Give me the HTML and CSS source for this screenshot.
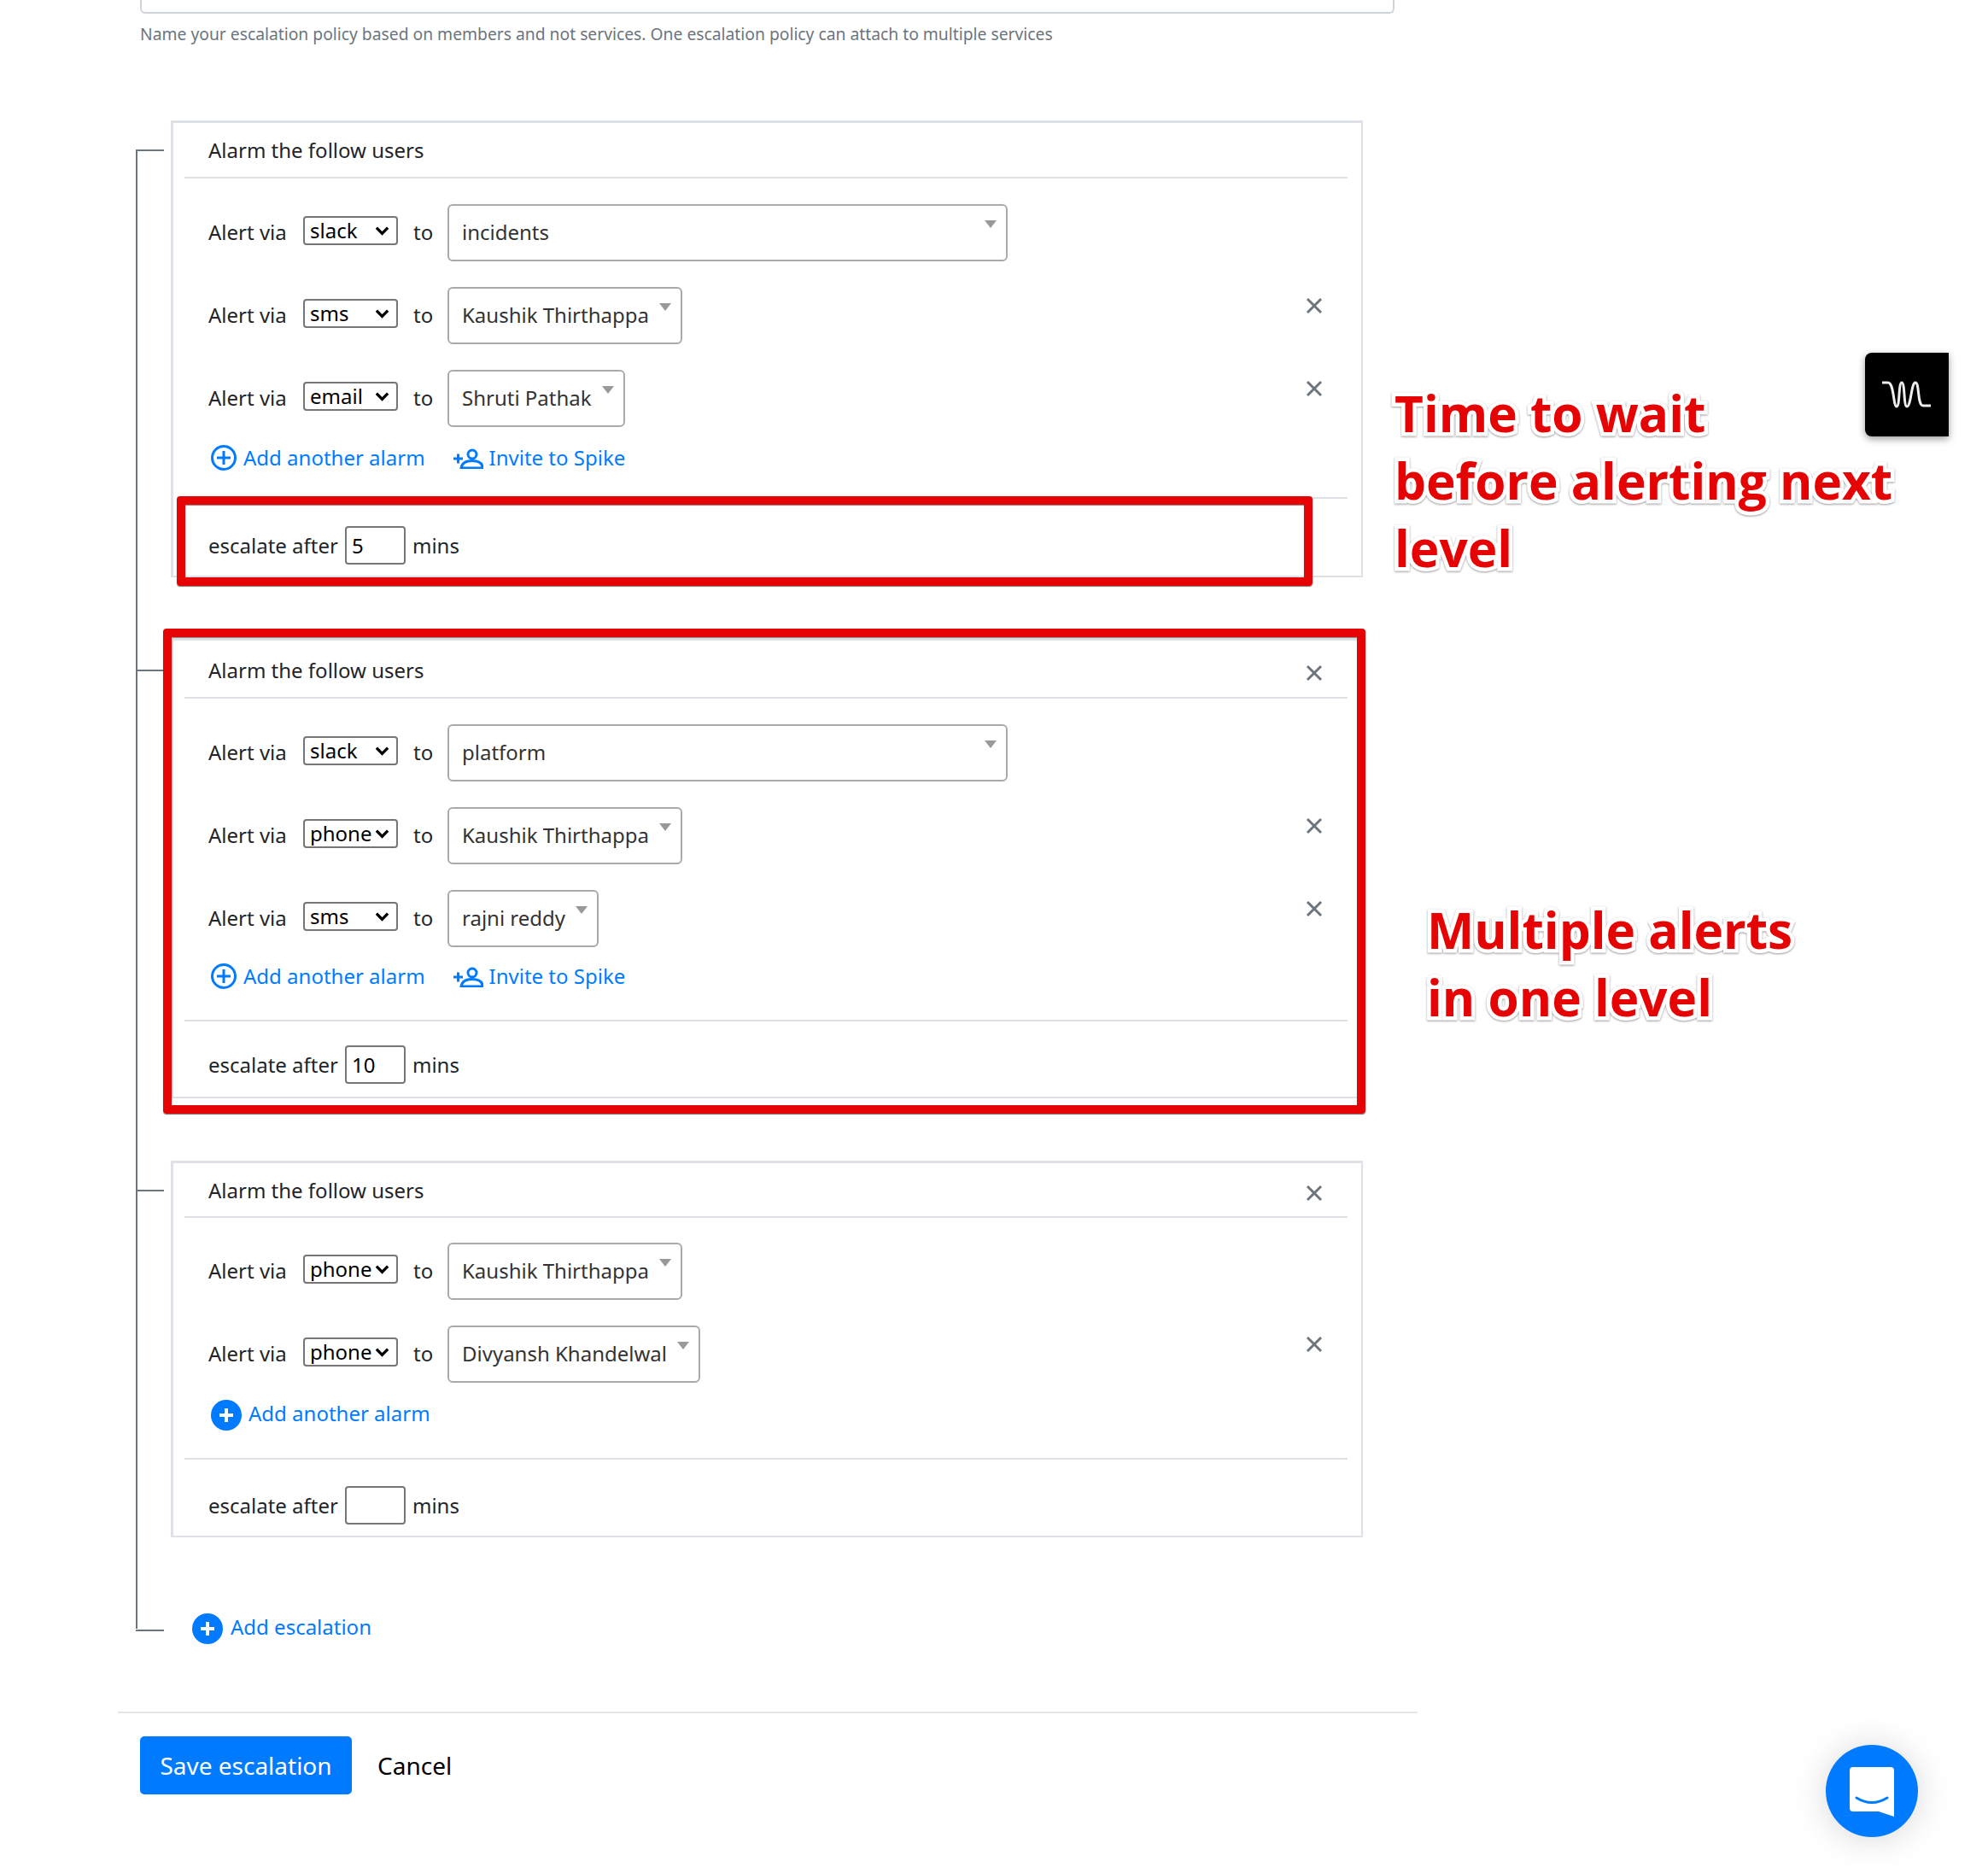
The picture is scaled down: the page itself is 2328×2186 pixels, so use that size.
FILE: index.html
```html
<!DOCTYPE html>
<html lang="en">
<head>
  <meta charset="UTF-8" />
  <title>Escalation policy</title>
  <link rel="stylesheet" href="styles.css">
</head>
<body>
  <div class="page">
    <div class="form">
      <div class="name-input"></div>
      <p class="hint">Name your escalation policy based on members and not services. One escalation policy can attach to multiple services</p>

      <div class="tree">

        <div class="level level-1">
          <div class="level-head">Alarm the follow users</div>
          <div class="alarm">
            <span class="via">Alert via</span>
            <select class="channel"><option>slack</option><option>sms</option><option>email</option><option>phone</option></select>
            <span class="to">to</span>
            <div class="picker picker-wide">incidents</div>
          </div>
          <div class="alarm">
            <span class="via">Alert via</span>
            <select class="channel"><option>sms</option><option>slack</option><option>email</option><option>phone</option></select>
            <span class="to">to</span>
            <div class="picker">Kaushik Thirthappa</div>
            <svg class="close" viewBox="0 0 20 20"><path d="M2 2L18 18M18 2L2 18"/></svg>
          </div>
          <div class="alarm">
            <span class="via">Alert via</span>
            <select class="channel"><option>email</option><option>slack</option><option>sms</option><option>phone</option></select>
            <span class="to">to</span>
            <div class="picker">Shruti Pathak</div>
            <svg class="close" viewBox="0 0 20 20"><path d="M2 2L18 18M18 2L2 18"/></svg>
          </div>
          <div class="actions">
            <a class="link"><svg class="plus-outline" viewBox="0 0 30 30"><circle cx="15" cy="15" r="13.5"/><path d="M15 7V23M7 15H23"/></svg>Add another alarm</a>
            <a class="link link-invite"><svg class="invite" viewBox="0 0 36 24"><path class="invite-line" d="M1 12H12M6.5 6.5V17.500"/><circle class="invite-line" cx="23" cy="7" r="5"/><path class="invite-fill" d="M10 23C11 17 16 14.500 23 14.500C30 14.500 35 17 35 23Z"/></svg>Invite to Spike</a>
          </div>
          <div class="escalate">escalate after <input class="mins" value="5"> mins</div>
        </div>

        <div class="level level-2">
          <div class="level-head">Alarm the follow users<svg class="close" viewBox="0 0 20 20"><path d="M2 2L18 18M18 2L2 18"/></svg></div>
          <div class="alarm">
            <span class="via">Alert via</span>
            <select class="channel"><option>slack</option><option>sms</option><option>email</option><option>phone</option></select>
            <span class="to">to</span>
            <div class="picker picker-wide">platform</div>
          </div>
          <div class="alarm">
            <span class="via">Alert via</span>
            <select class="channel"><option>phone</option><option>slack</option><option>sms</option><option>email</option></select>
            <span class="to">to</span>
            <div class="picker">Kaushik Thirthappa</div>
            <svg class="close" viewBox="0 0 20 20"><path d="M2 2L18 18M18 2L2 18"/></svg>
          </div>
          <div class="alarm">
            <span class="via">Alert via</span>
            <select class="channel"><option>sms</option><option>slack</option><option>email</option><option>phone</option></select>
            <span class="to">to</span>
            <div class="picker">rajni reddy</div>
            <svg class="close" viewBox="0 0 20 20"><path d="M2 2L18 18M18 2L2 18"/></svg>
          </div>
          <div class="actions">
            <a class="link"><svg class="plus-outline" viewBox="0 0 30 30"><circle cx="15" cy="15" r="13.5"/><path d="M15 7V23M7 15H23"/></svg>Add another alarm</a>
            <a class="link link-invite"><svg class="invite" viewBox="0 0 36 24"><path class="invite-line" d="M1 12H12M6.5 6.5V17.500"/><circle class="invite-line" cx="23" cy="7" r="5"/><path class="invite-fill" d="M10 23C11 17 16 14.500 23 14.500C30 14.500 35 17 35 23Z"/></svg>Invite to Spike</a>
          </div>
          <div class="escalate">escalate after <input class="mins" value="10"> mins</div>
        </div>

        <div class="level level-3">
          <div class="level-head">Alarm the follow users<svg class="close" viewBox="0 0 20 20"><path d="M2 2L18 18M18 2L2 18"/></svg></div>
          <div class="alarm">
            <span class="via">Alert via</span>
            <select class="channel"><option>phone</option><option>slack</option><option>sms</option><option>email</option></select>
            <span class="to">to</span>
            <div class="picker">Kaushik Thirthappa</div>
          </div>
          <div class="alarm">
            <span class="via">Alert via</span>
            <select class="channel"><option>phone</option><option>slack</option><option>sms</option><option>email</option></select>
            <span class="to">to</span>
            <div class="picker">Divyansh Khandelwal</div>
            <svg class="close" viewBox="0 0 20 20"><path d="M2 2L18 18M18 2L2 18"/></svg>
          </div>
          <div class="actions">
            <a class="link"><svg class="plus-solid" viewBox="0 0 36 36"><circle cx="18" cy="18" r="18"/><path d="M18 10V26M10 18H26"/></svg>Add another alarm</a>
          </div>
          <div class="escalate">escalate after <input class="mins"> mins</div>
        </div>

        <div class="add-level">
          <a class="link"><svg class="plus-solid" viewBox="0 0 36 36"><circle cx="18" cy="18" r="18"/><path d="M18 10V26M10 18H26"/></svg>Add escalation</a>
        </div>
      </div>

      <div class="form-foot">
        <button class="save">Save escalation</button>
        <button class="cancel">Cancel</button>
      </div>
    </div>

    <!-- annotations drawn over the screenshot -->
    <div class="mark mark-escalate"></div>
    <div class="mark mark-level"></div>
    <div class="note note-wait">Time to wait<br>before alerting next<br>level</div>
    <div class="note note-multi">Multiple alerts<br>in one level</div>

    <div class="side-tab">
      <svg viewBox="0 0 98 98"><path d="M20 35H27C34 35 33 63 37 63C41 63 39 35 43 35C47 35 45 63 49 63C54 63 54 35 59 35C64 35 61 62 68 62H77"/></svg>
    </div>

    <div class="chat">
      <svg viewBox="0 0 108 108"><path class="chat-bubble" d="M32 26H76Q80 26 80 30V84L62 78H32Q28 78 28 74V30Q28 26 32 26Z"/><path class="chat-smile" d="M36 62Q54 73 72 62"/></svg>
    </div>
  </div>
</body>
</html>
```

FILE: styles.css
```css
body {
  margin: 0;
  background: #fff;
  color: #212529;
  font-family: "Noto Sans", Roboto, sans-serif;
  font-size: 24px;
}

.page {
  position: relative;
  width: 2328px;
  height: 2186px;
  overflow: hidden;
}

.form {
  width: 1522px;
  margin-left: 138px;
}

.name-input {
  height: 14px;
  margin-left: 26px;
  margin-right: 27px;
  border: 2px solid #ced4da;
  border-top: none;
  border-radius: 0 0 6px 6px;
}

.hint {
  margin: 12px 0 0 26px;
  color: #6c757d;
  font-size: 19.300px;
  line-height: 24px;
}

/* levels and the line joining them */
.tree {
  position: relative;
  margin: 89px 0 0 21px;
  padding-left: 41px;
  width: 1396px;
}

.tree::before {
  content: "";
  position: absolute;
  left: 0;
  top: 34px;
  bottom: 13px;
  width: 2px;
  background: #6c757d;
}

.level {
  position: relative;
  box-sizing: border-box;
  padding: 0 16px 0 13px;
  border: 3px solid #dee2e6;
  border-right-width: 2px;
  border-bottom-width: 2px;
}

.level::before,
.add-level::before {
  content: "";
  position: absolute;
  left: -44px;
  top: 31px;
  width: 33px;
  height: 2px;
  background: #6c757d;
}

.level-2 {
  margin-top: 71px;
}

.level-3 {
  margin-top: 73px;
}

.level-head {
  display: flex;
  align-items: center;
  justify-content: space-between;
  box-sizing: border-box;
  height: 65px;
  padding: 0 29px 0 28px;
  margin-bottom: 30px;
  border-bottom: 2px solid #dee2e6;
}

.level-2 .level-head {
  height: 68px;
  padding-top: 3px;
}

.level-3 .level-head {
  height: 64px;
  padding-top: 1px;
  margin-bottom: 29px;
}

.level-2::before {
  top: 34px;
}

.alarm {
  display: flex;
  align-items: center;
  height: 67px;
  padding: 0 29px 0 28px;
  margin-bottom: 30px;
}

.via {
  width: 111px;
  margin-top: -2px;
}

.channel {
  appearance: none;
  box-sizing: border-box;
  width: 111px;
  height: 34px;
  margin-top: -6px;
  padding: 0 0 0 6px;
  background: #fff url("data:image/svg+xml,%3Csvg xmlns='http://www.w3.org/2000/svg' viewBox='0 0 18 12'%3E%3Cpath d='M2 2.500L9 9.500L16 2.500' fill='none' stroke='%23000' stroke-width='3.500'/%3E%3C/svg%3E") no-repeat right 8px center / 17px 12px;
  border: 2px solid #767676;
  border-radius: 4px;
  color: #000;
  font-family: inherit;
  font-size: 24px;
  line-height: 28px;
}

.to {
  width: 40px;
  margin-left: 18px;
  margin-top: -2px;
}

.picker {
  position: relative;
  box-sizing: border-box;
  height: 67px;
  padding: 0 37px 0 15px;
  border: 2px solid #aaa;
  border-radius: 6px;
  color: #333;
  line-height: 61px;
}

.picker::after {
  content: "";
  position: absolute;
  right: 11px;
  top: 17px;
  border-left: 7px solid transparent;
  border-right: 7px solid transparent;
  border-top: 9px solid #999;
}

.picker-wide {
  width: 656px;
}

.close {
  width: 20px;
  height: 20px;
  margin-left: auto;
  margin-bottom: 24px;
}

.level-head .close {
  margin-bottom: -6px;
}

.close path {
  fill: none;
  stroke: #6c757d;
  stroke-width: 3;
}

.actions {
  display: flex;
  align-items: center;
  gap: 32px;
  height: 34px;
  padding-left: 31px;
  margin-top: -12px;
  margin-bottom: 35px;
}

.level-1 .actions {
  margin-bottom: 30px;
}

.level-2 .actions {
  margin-top: -14px;
}

.level-3 .actions {
  margin-bottom: 36px;
}

.link {
  display: flex;
  align-items: center;
  gap: 8px;
  color: #007bff;
}

.link-invite {
  gap: 7px;
}

.add-level .link {
  gap: 9px;
}

.plus-outline {
  width: 30px;
  height: 30px;
  margin-top: 2px;
}

.plus-outline circle,
.plus-outline path {
  fill: none;
  stroke: #007bff;
  stroke-width: 3;
}

.invite {
  width: 36px;
  height: 24px;
  margin-top: 3px;
}

.invite-line {
  fill: none;
  stroke: #007bff;
  stroke-width: 3;
}

.invite-fill {
  fill: #fff;
  stroke: #007bff;
  stroke-width: 3;
}

.plus-solid {
  width: 36px;
  height: 36px;
  margin-top: 5px;
}

.plus-solid circle {
  fill: #007bff;
}

.plus-solid path {
  fill: none;
  stroke: #fff;
  stroke-width: 4;
}

.escalate {
  display: flex;
  align-items: center;
  gap: 8px;
  box-sizing: border-box;
  height: 92px;
  padding: 18px 0 0 28px;
  border-top: 2px solid #dee2e6;
}

.level-2 .escalate {
  height: 90px;
  padding-top: 13px;
}

.level-3 .escalate {
  height: 91px;
  padding-top: 18px;
}

.mins {
  box-sizing: border-box;
  width: 71px;
  height: 45px;
  padding: 0 6px;
  border: 2px solid #767676;
  border-radius: 4px;
  color: #000;
  font-family: inherit;
  font-size: 24px;
}

.add-level {
  position: relative;
  height: 36px;
  padding-left: 25px;
  margin-top: 84px;
}

.add-level::before {
  top: 24px;
  left: -41px;
}

.form-foot {
  display: flex;
  align-items: center;
  gap: 30px;
  padding: 27px 0 0 26px;
  margin-top: 84px;
  border-top: 2px solid #e3e5e7;
}

.save {
  width: 248px;
  height: 68px;
  border: none;
  border-radius: 5px;
  background: #007bff;
  color: #fff;
  font-family: inherit;
  font-size: 28px;
}

.cancel {
  padding: 0;
  border: none;
  background: none;
  color: #000;
  font-family: inherit;
  font-size: 28px;
}

/* red annotations */
.mark {
  position: absolute;
  box-sizing: border-box;
  border: 10px solid #e60303;
  border-radius: 4px;
  box-shadow: 0 1px 1px #777, inset 0 1px 1px #888;
}

.mark-escalate {
  left: 207px;
  top: 581px;
  width: 1330px;
  height: 105px;
}

.mark-level {
  left: 191px;
  top: 736px;
  width: 1408px;
  height: 568px;
}

.note {
  position: absolute;
  color: #e60303;
  font-family: "Open Sans", sans-serif;
  font-size: 58.500px;
  font-weight: 700;
  line-height: 79px;
  -webkit-text-stroke: 9px #fff;
  paint-order: stroke fill;
  filter: drop-shadow(0 1px 1px #999);
}

.note-wait {
  left: 1633px;
  top: 444px;
}

.note-multi {
  left: 1671px;
  top: 1049px;
}

.side-tab {
  position: absolute;
  left: 2184px;
  top: 413px;
  width: 98px;
  height: 98px;
  background: #000;
  border-radius: 8px 0 0 8px;
  box-shadow: 0 3px 8px rgba(0, 0, 0, 0.4);
}

.side-tab svg {
  display: block;
}

.side-tab path {
  fill: none;
  stroke: #eee;
  stroke-width: 3;
}

.chat {
  position: absolute;
  left: 2138px;
  top: 2043px;
  width: 108px;
  height: 108px;
  background: #007bff;
  border-radius: 50%;
  box-shadow: 0 2px 40px rgba(0, 0, 0, 0.16);
}

.chat svg {
  display: block;
}

.chat-bubble {
  fill: #fff;
}

.chat-smile {
  fill: none;
  stroke: #007bff;
  stroke-width: 3;
  stroke-linecap: round;
}
```
